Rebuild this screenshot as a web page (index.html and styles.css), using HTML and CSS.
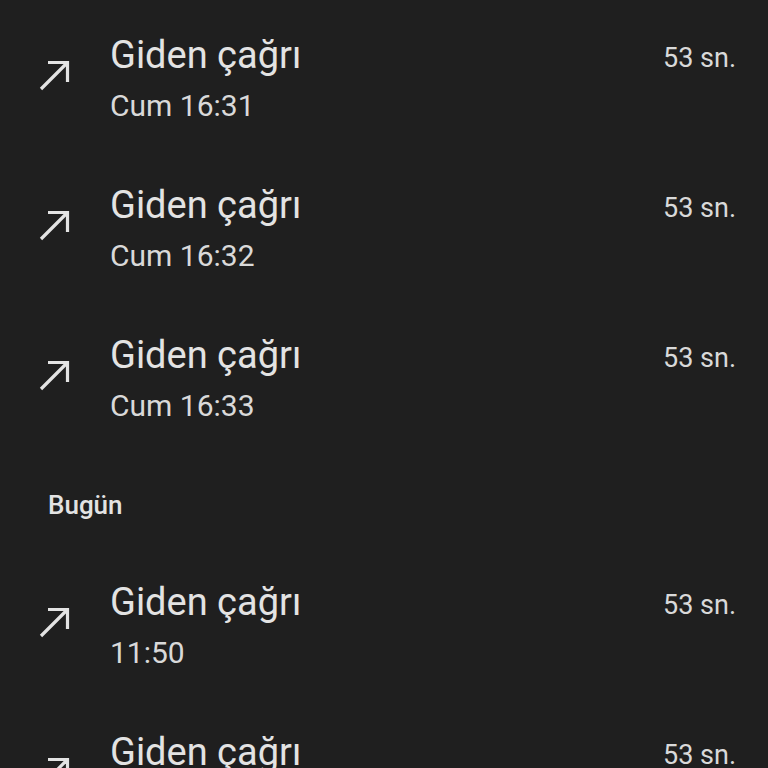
FILE: index.html
```html
<!DOCTYPE html>
<html lang="tr">
<head>
    <meta charset="UTF-8">
    <meta name="viewport" content="width=device-width, initial-scale=1.0">
    <title>Arama geçmişi</title>
    <link rel="stylesheet" href="styles.css">
</head>
<body>

    <div class="call-list">
        <div class="call-row">
            <svg class="call-icon" viewBox="0 0 36 36"><path d="M12 5.5H31.5V25M31.5 5.5L5 32"/></svg>
            <div class="call-info">
                <div class="call-type">Giden çağrı</div>
                <div class="call-time">Cum 16:31</div>
            </div>
            <div class="call-duration">53 sn.</div>
        </div>

        <div class="call-row">
            <svg class="call-icon" viewBox="0 0 36 36"><path d="M12 5.5H31.5V25M31.5 5.5L5 32"/></svg>
            <div class="call-info">
                <div class="call-type">Giden çağrı</div>
                <div class="call-time">Cum 16:32</div>
            </div>
            <div class="call-duration">53 sn.</div>
        </div>

        <div class="call-row">
            <svg class="call-icon" viewBox="0 0 36 36"><path d="M12 5.5H31.5V25M31.5 5.5L5 32"/></svg>
            <div class="call-info">
                <div class="call-type">Giden çağrı</div>
                <div class="call-time">Cum 16:33</div>
            </div>
            <div class="call-duration">53 sn.</div>
        </div>

        <!-- Day header -->
        <div class="day-header">Bugün</div>

        <div class="call-row">
            <svg class="call-icon" viewBox="0 0 36 36"><path d="M12 5.5H31.5V25M31.5 5.5L5 32"/></svg>
            <div class="call-info">
                <div class="call-type">Giden çağrı</div>
                <div class="call-time">11:50</div>
            </div>
            <div class="call-duration">53 sn.</div>
        </div>

        <div class="call-row">
            <svg class="call-icon" viewBox="0 0 36 36"><path d="M12 5.5H31.5V25M31.5 5.5L5 32"/></svg>
            <div class="call-info">
                <div class="call-type">Giden çağrı</div>
            </div>
            <div class="call-duration">53 sn.</div>
        </div>
    </div>

</body>
</html>
```

FILE: styles.css
```css
/* Page */
body {
    margin: 0;
    padding: 0;
    height: 100vh;
    background-color: #1f1f1f;
    font-family: Roboto, 'Noto Sans', sans-serif;
    color: #e3e3e3;
    overflow: hidden;
}

.call-list {
    display: flex;
    flex-direction: column;
}

/* One call entry */
.call-row {
    display: flex;
    align-items: flex-start;
    height: 150px;
    flex-shrink: 0;
    box-sizing: border-box;
    padding: 31px 32px 0 36px;
}

.call-icon {
    width: 36px;
    height: 36px;
    flex-shrink: 0;
    margin-top: 26px;
    margin-right: 38px;
    fill: none;
    stroke: #e3e3e3;
    stroke-width: 3.2;
}

.call-info {
    flex: 1;
}

.call-type {
    font-size: 38px;
    line-height: 48px;
}

.call-time {
    font-size: 30px;
    line-height: 44px;
    margin-top: 5px;
    color: #d9d9d9;
}

.call-duration {
    font-size: 27px;
    line-height: 48px;
    margin-top: 3px;
    color: #d9d9d9;
}

/* Section header */
.day-header {
    height: 97px;
    flex-shrink: 0;
    box-sizing: border-box;
    padding: 40px 0 0 48px;
    font-size: 26px;
    line-height: 30px;
    font-weight: 500;
    color: #e3e3e3;
}
```
